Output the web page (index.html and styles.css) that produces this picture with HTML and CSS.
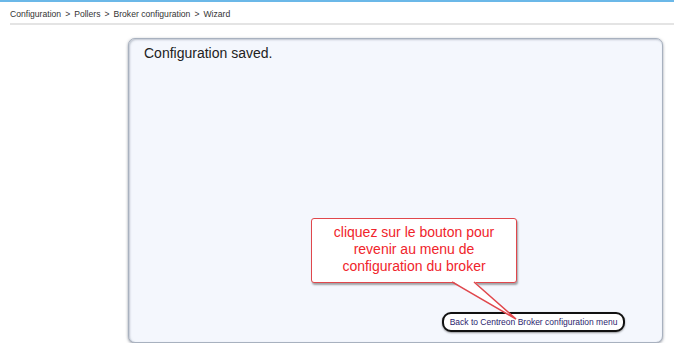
FILE: index.html
```html
<!DOCTYPE html>
<html lang="en">

<head>
  <meta charset="UTF-8">
  <meta name="viewport" content="width=device-width, initial-scale=1.0">
  <title>Broker configuration - Wizard</title>
  <link rel="stylesheet" href="styles.css">
</head>

<body>
  <div class="topline"></div>
  <div class="breadcrumb">
    <span>Configuration</span><span class="sep">&gt;</span><span>Pollers</span><span class="sep">&gt;</span><span>Broker configuration</span><span class="sep">&gt;</span><span>Wizard</span>
  </div>

  <div class="panel">
    <div class="panel__title">Configuration saved.</div>

    <div class="callout">
      cliquez sur le bouton pour<br>
      revenir au menu de<br>
      configuration du broker
    </div>
    <svg class="callout__tail" width="70" height="42" viewBox="0 0 70 42">
      <polygon points="0,0 22,0 64,38" fill="#fff"/>
      <polyline points="0,1 64,38 22,1" fill="none" stroke="#e0474c" stroke-width="1.5"/>
    </svg>

    <button type="button" class="back-btn">Back to Centreon Broker configuration menu</button>
  </div>
</body>

</html>
```

FILE: styles.css
```css
body {
  margin: 0;
  font-family: "Liberation Sans", Arial, sans-serif;
  background: #fff;
}
.topline {
  height: 2px;
  background: #6bb8e8;
}
.breadcrumb {
  margin: 0 0 0 10px;
  padding: 7px 0 4px;
  font-size: 8.6px;
  color: #333;
  border-bottom: 2px solid #e4e4e4;
}
.breadcrumb .sep {
  margin: 0 4px;
}
.panel {
  position: relative;
  display: flex;
  flex-direction: column;
  box-sizing: border-box;
  width: 535px;
  height: 305px;
  margin: 13px 0 0 128px;
  padding: 6px 37px 10px 15px;
  background: #f4f7fd;
  border: 1px solid #a8b1bf;
  border-radius: 7px;
  box-shadow: 0 1px 3px rgba(60, 70, 90, 0.55), inset 1px 1px 2px rgba(90, 100, 120, 0.35);
}
.panel__title {
  font-size: 14px;
  color: #222;
}
.callout {
  position: absolute;
  left: 182px;
  top: 179px;
  box-sizing: border-box;
  width: 206px;
  height: 65px;
  padding-top: 5px;
  background: #fff;
  border: 1.5px solid #e0474c;
  border-radius: 3px;
  box-shadow: 1px 2px 2px rgba(0, 0, 0, 0.35);
  color: #f0242b;
  font-size: 14px;
  line-height: 17px;
  text-align: center;
}
.callout__tail {
  position: absolute;
  left: 323px;
  top: 242px;
}
.back-btn {
  align-self: flex-end;
  margin-top: auto;
  box-sizing: border-box;
  width: 183px;
  height: 20px;
  padding: 0;
  background: #fff;
  border: 2px solid #111;
  border-radius: 9px;
  box-shadow: 0 1px 2px rgba(0, 0, 0, 0.4);
  color: #2b1d6e;
  font-family: "Liberation Sans", Arial, sans-serif;
  font-size: 8.5px;
}
```
